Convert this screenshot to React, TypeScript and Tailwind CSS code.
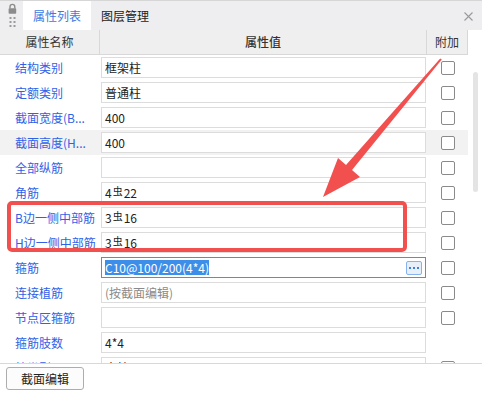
import React from 'react';

type Row = {
  label: string;
  value?: string;
  steel?: [string, string];
  muted?: boolean;
  selected?: boolean;
  check?: boolean;
  hover?: boolean;
};

const rows: Row[] = [
  { label: '结构类别', value: '框架柱', check: true },
  { label: '定额类别', value: '普通柱', check: true },
  { label: '截面宽度(B...', value: '400', check: true },
  { label: '截面高度(H...', value: '400', check: true, hover: true },
  { label: '全部纵筋', value: '', check: true },
  { label: '角筋', steel: ['4', '22'], check: true },
  { label: 'B边一侧中部筋', steel: ['3', '16'], check: true },
  { label: 'H边一侧中部筋', steel: ['3', '16'], check: true },
  { label: '箍筋', value: 'C10@100/200(4*4)', selected: true, check: true },
  { label: '连接植筋', value: '(按截面编辑)', muted: true, check: true },
  { label: '节点区箍筋', value: '', check: true },
  { label: '箍筋肢数', value: '4*4' },
  { label: '柱类型', value: '中柱', check: true },
];

const LockGrip = () => (
  <svg width="12" height="26" viewBox="0 0 12 26" className="mt-[1px]">
    <path d="M4 6.5V4.8a2.4 2.4 0 0 1 4.8 0v1.7" fill="none" stroke="#8c8c8c" strokeWidth="1.4" />
    <rect x="2.6" y="6.2" width="7.6" height="5.6" rx="0.8" fill="#8c8c8c" />
    {[15, 19, 23].map((y) => (
      <g key={y} fill="#9a9a9a">
        <rect x="3.5" y={y} width="2" height="2" />
        <rect x="7.5" y={y} width="2" height="2" />
      </g>
    ))}
  </svg>
);

const Checkbox = () => (
  <span className="block w-[14px] h-[14px] rounded-[2px] border border-[#8a8a8a] bg-white" />
);

const Steel = ({ n, d }: { n: string; d: string }) => (
  <span>
    {n}
    <span className="text-[10px] relative -top-[3px] mx-[1px]">虫</span>
    {d}
  </span>
);

const App: React.FC = () => {
  return (
    <div className="relative w-[482px] h-[393px] overflow-hidden bg-white flex flex-col font-['Noto_Sans_CJK_SC','Microsoft_YaHei',sans-serif] text-[12px] text-[#222]">
      {/* tabs */}
      <div className="h-[30px] shrink-0 flex bg-[#eeeef0] border-t border-[#d6d6d6]">
        <div className="w-[23px] flex justify-center">
          <LockGrip />
        </div>
        <div className="w-[68px] bg-white flex items-center justify-center text-[#3b7be4]">属性列表</div>
        <div className="w-[68px] flex items-center justify-center text-[#222]">图层管理</div>
        <div className="flex-1" />
        <div className="w-[24px] flex items-center justify-center pr-[4px] pt-[1px]">
          <svg width="9" height="9" viewBox="0 0 9 9">
            <path d="M0.5 0.5l8 8M8.5 0.5l-8 8" stroke="#9a9a9a" strokeWidth="1.1" />
          </svg>
        </div>
      </div>

      {/* grid */}
      <div className="h-[333px] shrink-0 flex overflow-hidden">
        <div className="w-[468px] flex flex-col">
          <div className="h-[25px] shrink-0 flex bg-[#efefef] border-b border-r border-[#d8d8d8] text-[#333]">
            <div className="w-[100px] flex items-center justify-center border-r border-[#d8d8d8]">属性名称</div>
            <div className="w-[327px] flex items-center justify-center border-r border-[#d8d8d8] font-medium">属性值</div>
            <div className="flex-1 flex items-center justify-center">附加</div>
          </div>
          {rows.map((r) => (
            <div key={r.label} className={`h-[25px] shrink-0 flex items-center ${r.hover ? 'bg-[#f2f2f2]' : ''}`}>
              <div className="w-[100px] pl-[15px] text-[#2f62e6] whitespace-nowrap overflow-hidden">{r.label}</div>
              <div className="w-[327px] pl-[1px]">
                <div
                  className={`w-[325px] h-[21px] flex items-center pl-[3px] pr-[3px] bg-white border ${
                    r.selected ? 'border-[#5b8ad8]' : 'border-[#dcdcdc]'
                  }`}
                >
                  {r.steel ? (
                    <Steel n={r.steel[0]} d={r.steel[1]} />
                  ) : r.selected ? (
                    <>
                      <span className="bg-[#3d8ee9] text-white leading-[15px]">{r.value}</span>
                      <span className="flex-1" />
                      <span className="w-[16px] h-[14px] rounded-[2px] border border-[#86b3ee] bg-[#e8eff9] flex items-center justify-center gap-[2px]">
                        <i className="block w-[2px] h-[2px] bg-[#3a84e0]" />
                        <i className="block w-[2px] h-[2px] bg-[#3a84e0]" />
                        <i className="block w-[2px] h-[2px] bg-[#3a84e0]" />
                      </span>
                    </>
                  ) : (
                    <span className={r.muted ? 'text-[#8a8a8a]' : ''}>{r.value}</span>
                  )}
                </div>
              </div>
              <div className="flex-1 flex justify-center">{r.check && <Checkbox />}</div>
            </div>
          ))}
        </div>
        <div className="flex-1 pl-[5px]">
          <div className="mt-[42px] w-[5px] h-[120px] rounded-full bg-[#e4e4e4]" />
        </div>
      </div>

      {/* footer */}
      <div className="flex-1 border-t border-[#d8d8d8] pl-[6px] pt-[3px]">
        <button className="w-[78px] h-[23px] rounded-[3px] border border-[#adadad] bg-[#fcfcfc] text-[#222] text-[12px]">
          截面编辑
        </button>
      </div>

      {/* annotation overlay */}
      <svg className="absolute inset-0 pointer-events-none" width="482" height="393" viewBox="0 0 482 393">
        <rect x="9" y="203" width="396" height="47" rx="3" fill="none" stroke="#f24f4f" strokeWidth="4" />
        <polygon
          points="440.2,58.4 346,164.9 338,158 323,197 360,177 352,170.1 441.8,59.6"
          fill="#f24f4f"
        />
      </svg>
    </div>
  );
};

export default App;
